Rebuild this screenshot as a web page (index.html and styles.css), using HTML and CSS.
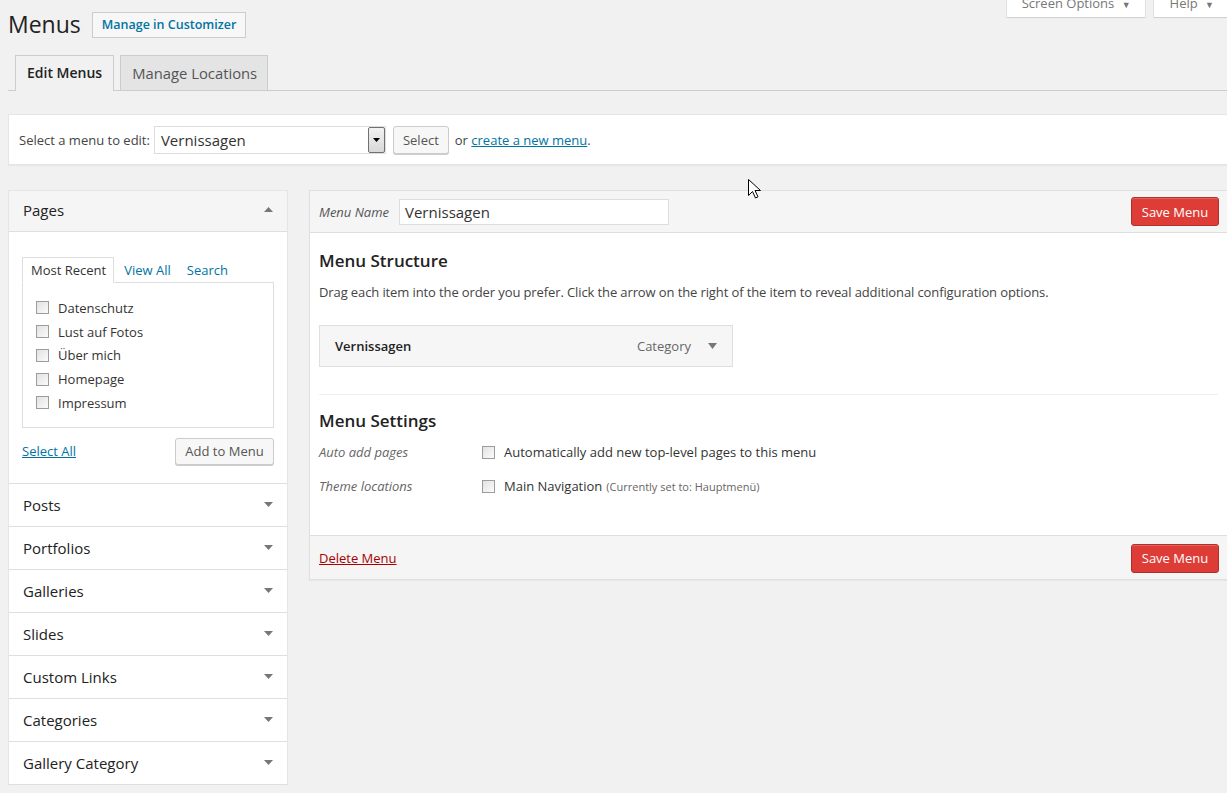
FILE: index.html
```html
<!DOCTYPE html>
<html lang="de">
<head>
    <meta charset="UTF-8">
    <title>Menus</title>
    <link rel="stylesheet" href="styles.css">
</head>
<body>
    <div class="wrap">
        <div class="top">
            <h1>Menus</h1>
            <a class="title-action" href="#">Manage in Customizer</a>
            <div class="screen-links">
                <span class="screen-tab">Screen Options <span class="caret">&#9660;</span></span>
                <span class="screen-tab help">Help <span class="caret">&#9660;</span></span>
            </div>
        </div>

        <div class="nav-tabs">
            <a class="nav-tab active" href="#">Edit Menus</a>
            <a class="nav-tab" href="#">Manage Locations</a>
        </div>

        <div class="manage-menus">
            <span class="select-label">Select a menu to edit:</span>
            <div class="fake-select">
                <span>Vernissagen</span>
                <span class="select-arrow"><svg width="7" height="4" viewBox="0 0 7 4"><path d="M0 0h7L3.5 4z" fill="#000"/></svg></span>
            </div>
            <button class="button">Select</button>
            <span class="or-text">or <a href="#">create a new menu</a>.</span>
        </div>

        <div class="columns">
            <div class="sidebar">
                <div class="acc-section open">
                    <div class="acc-title">Pages
                        <svg class="acc-arrow" width="9" height="5" viewBox="0 0 9 5"><path d="M0 5h9L4.5 0z" fill="#777"/></svg>
                    </div>
                    <div class="acc-content">
                        <div class="inner-tabs">
                            <span class="inner-tab active">Most Recent</span>
                            <a class="inner-tab" href="#">View All</a>
                            <a class="inner-tab" href="#">Search</a>
                        </div>
                        <div class="tab-panel">
                            <label class="check-row"><span class="cb"></span>Datenschutz</label>
                            <label class="check-row"><span class="cb"></span>Lust auf Fotos</label>
                            <label class="check-row"><span class="cb"></span>Über mich</label>
                            <label class="check-row"><span class="cb"></span>Homepage</label>
                            <label class="check-row"><span class="cb"></span>Impressum</label>
                        </div>
                        <div class="add-row">
                            <a href="#">Select All</a>
                            <button class="button">Add to Menu</button>
                        </div>
                    </div>
                </div>
                <div class="acc-section"><div class="acc-title">Posts<svg class="acc-arrow" width="9" height="5" viewBox="0 0 9 5"><path d="M0 0h9L4.5 5z" fill="#777"/></svg></div></div>
                <div class="acc-section"><div class="acc-title">Portfolios<svg class="acc-arrow" width="9" height="5" viewBox="0 0 9 5"><path d="M0 0h9L4.5 5z" fill="#777"/></svg></div></div>
                <div class="acc-section"><div class="acc-title">Galleries<svg class="acc-arrow" width="9" height="5" viewBox="0 0 9 5"><path d="M0 0h9L4.5 5z" fill="#777"/></svg></div></div>
                <div class="acc-section"><div class="acc-title">Slides<svg class="acc-arrow" width="9" height="5" viewBox="0 0 9 5"><path d="M0 0h9L4.5 5z" fill="#777"/></svg></div></div>
                <div class="acc-section"><div class="acc-title">Custom Links<svg class="acc-arrow" width="9" height="5" viewBox="0 0 9 5"><path d="M0 0h9L4.5 5z" fill="#777"/></svg></div></div>
                <div class="acc-section"><div class="acc-title">Categories<svg class="acc-arrow" width="9" height="5" viewBox="0 0 9 5"><path d="M0 0h9L4.5 5z" fill="#777"/></svg></div></div>
                <div class="acc-section"><div class="acc-title">Gallery Category<svg class="acc-arrow" width="9" height="5" viewBox="0 0 9 5"><path d="M0 0h9L4.5 5z" fill="#777"/></svg></div></div>
            </div>

            <div class="menu-edit">
                <div class="menu-header">
                    <span class="menu-name-label">Menu Name</span>
                    <div class="text-input">Vernissagen</div>
                    <button class="button-save">Save Menu</button>
                </div>
                <div class="menu-body">
                    <h3>Menu Structure</h3>
                    <p class="desc">Drag each item into the order you prefer. Click the arrow on the right of the item to reveal additional configuration options.</p>
                    <div class="menu-item">
                        <span class="item-title">Vernissagen</span>
                        <span class="item-type">Category</span>
                        <svg width="9" height="6" viewBox="0 0 9 6"><path d="M0 0h9L4.5 6z" fill="#777"/></svg>
                    </div>
                    <div class="divider"></div>
                    <h3>Menu Settings</h3>
                    <div class="settings">
                        <span class="setting-label">Auto add pages</span>
                        <label class="setting-value"><span class="cb"></span>Automatically add new top-level pages to this menu</label>
                        <span class="setting-label">Theme locations</span>
                        <label class="setting-value"><span class="cb"></span>Main Navigation <small>(Currently set to: Hauptmenü)</small></label>
                    </div>
                </div>
                <div class="menu-footer">
                    <a class="delete-link" href="#">Delete Menu</a>
                    <button class="button-save">Save Menu</button>
                </div>
            </div>
        </div>
    </div>

    <svg class="cursor" width="13" height="20" viewBox="0 0 13 20">
        <path d="M0.5 0.5v16l4-4 3 6.5 2.5-1.2-3-6.3h5.5z" fill="#fff" stroke="#000" stroke-width="1"/>
    </svg>
</body>
</html>
```

FILE: styles.css
```css
body {
    margin: 0;
    background-color: #f1f1f1;
    font-family: "Open Sans", sans-serif;
    font-size: 13px;
    color: #444;
    overflow: hidden;
}
a {
    color: #0074a2;
}
.wrap {
    padding-left: 8px;
}
.top {
    display: flex;
    align-items: flex-start;
    height: 55px;
}
h1 {
    margin: 10px 0 0;
    font-size: 23px;
    font-weight: 400;
    line-height: 29px;
    color: #222;
}
.title-action {
    margin: 12px 0 0 11px;
    padding: 0 9px;
    height: 24px;
    line-height: 24px;
    border: 1px solid #ccc;
    background: #f7f7f7;
    font-size: 12.5px;
    font-weight: 600;
    color: #0074a2;
    text-decoration: none;
}
.screen-links {
    margin-left: auto;
    display: flex;
    gap: 9px;
    margin-right: -3px;
}
.screen-tab {
    margin-top: -8px;
    height: 25px;
    line-height: 23px;
    padding: 0 16px;
    background: #fff;
    color: #777;
    white-space: nowrap;
    box-shadow: 0 0 0 1px rgba(0, 0, 0, 0.05), 0 1px 1px rgba(0, 0, 0, 0.08);
    font-size: 13px;
}
.screen-tab:first-child {
    padding: 0 14px 0 15px;
}
.caret {
    font-size: 9px;
    margin-left: 4px;
    color: #777;
}
.nav-tabs {
    display: flex;
    gap: 6px;
    padding-left: 7px;
    border-bottom: 1px solid #ccc;
}
.nav-tab {
    height: 34px;
    line-height: 34px;
    padding: 0 10px 0 11px;
    border: 1px solid #ccc;
    border-bottom: none;
    background: #e4e4e4;
    color: #555;
    font-size: 14.8px;
    text-decoration: none;
    margin-bottom: -1px;
}
.nav-tab.active {
    background: #f1f1f1;
    color: #222;
    font-size: 14px;
    font-weight: 600;
    height: 35px;
    padding: 0 11px 0 11px;
}
.manage-menus {
    margin-top: 23px;
    display: flex;
    align-items: center;
    height: 49px;
    padding: 0 10px;
    background: #fff;
    border: 1px solid #e5e5e5;
    border-right: none;
    box-shadow: 0 1px 1px rgba(0, 0, 0, 0.04);
}
.select-label {
    margin-right: 4px;
}
.fake-select {
    display: flex;
    align-items: center;
    justify-content: space-between;
    box-sizing: border-box;
    width: 232px;
    height: 28px;
    border: 1px solid #ddd;
    padding: 0 0 0 6px;
    font-size: 15px;
    color: #333;
}
.select-arrow {
    display: flex;
    align-items: center;
    justify-content: center;
    box-sizing: border-box;
    width: 17px;
    height: 26px;
    border: 1px solid #707070;
    border-radius: 2px;
    background: linear-gradient(#f2f2f2, #d8d8d8);
}
.button {
    font-family: "Open Sans", sans-serif;
    font-size: 13px;
    color: #555;
    background: #f7f7f7;
    border: 1px solid #ccc;
    border-radius: 3px;
    box-shadow: 0 1px 0 #ccc;
    height: 28px;
    padding: 0 10px;
}
.manage-menus .button {
    margin-left: 7px;
    height: 28px;
    padding: 0 9px;
}
.or-text {
    margin-left: 6px;
}
.columns {
    display: flex;
    align-items: flex-start;
    gap: 21px;
    margin-top: 25px;
}
.sidebar {
    flex: 0 0 280px;
    box-sizing: border-box;
    border: 1px solid #e5e5e5;
    border-bottom: none;
    background: #fff;
    box-shadow: 0 1px 1px rgba(0, 0, 0, 0.04);
}
.acc-section {
    border-bottom: 1px solid #dfdfdf;
}
.acc-title {
    display: flex;
    align-items: center;
    justify-content: space-between;
    height: 42px;
    padding: 0 14px 0 14px;
    font-size: 15px;
    color: #222;
}
.open .acc-title {
    height: 41px;
    padding-bottom: 3px;
    box-sizing: border-box;
    background: #f5f5f5;
    border-bottom: 1px solid #dfdfdf;
}
.open .acc-content {
    padding-top: 25px;
}
.acc-content {
    padding: 25px 13px 18px;
}
.inner-tabs {
    display: flex;
    align-items: flex-end;
    height: 25px;
}
.inner-tab {
    padding: 0 10px 0 0;
    line-height: 24px;
    text-decoration: none;
}
.inner-tab.active {
    padding: 0 7px 0 8px;
    border: 1px solid #ddd;
    border-bottom: 1px solid #fff;
    margin-bottom: -1px;
    color: #333;
    background: #fff;
    margin-right: 10px;
}
.inner-tabs a + a {
    margin-left: 6px;
}
.tab-panel {
    border: 1px solid #ddd;
    padding: 13px 13px 12px;
}
.check-row {
    display: flex;
    align-items: center;
    height: 23.75px;
    color: #333;
}
.cb {
    display: inline-block;
    flex: 0 0 auto;
    box-sizing: border-box;
    width: 13px;
    height: 13px;
    border: 1px solid #9c9c9c;
    background: linear-gradient(135deg, #e2e2e2, #fbfbfb);
    margin-right: 9px;
}
.add-row {
    display: flex;
    justify-content: space-between;
    align-items: center;
    margin-top: 10px;
}
.add-row .button {
    height: 27px;
    width: 99px;
    padding: 0;
}
.menu-edit {
    flex: 1;
    border: 1px solid #dfdfdf;
    border-right: none;
    background: #fff;
    box-shadow: 0 1px 1px rgba(0, 0, 0, 0.04);
}
.menu-header {
    display: flex;
    align-items: center;
    height: 41px;
    padding: 0 8px 0 9px;
    background: #f5f5f5;
    border-bottom: 1px solid #dfdfdf;
}
.menu-name-label {
    font-style: italic;
    color: #555;
    width: 80px;
}
.text-input {
    box-sizing: border-box;
    width: 270px;
    height: 26px;
    line-height: 24px;
    padding: 0 5px;
    border: 1px solid #ddd;
    background: #fff;
    font-size: 15px;
    color: #333;
}
.button-save {
    margin-left: auto;
    font-family: "Open Sans", sans-serif;
    font-size: 13px;
    color: #fff;
    background: #dd3d36;
    border: 1px solid #b0302a;
    border-radius: 3px;
    height: 29px;
    width: 88px;
    padding: 0;
    box-shadow: inset 0 1px 0 rgba(255, 255, 255, 0.2);
}
.menu-body {
    padding: 0 9px 32px;
}
h3 {
    margin: 16px 0 0;
    font-size: 17px;
    font-weight: 600;
    line-height: 24px;
    color: #222;
}
.desc {
    margin: 10px 0 0;
    line-height: 18px;
    letter-spacing: -0.11px;
}
.menu-item {
    display: flex;
    align-items: center;
    box-sizing: border-box;
    width: 414px;
    height: 42px;
    margin-top: 24px;
    padding: 0 15px;
    background: #f6f6f6;
    border: 1px solid #dfdfdf;
}
.item-title {
    font-weight: 600;
    color: #222;
}
.item-type {
    margin-left: auto;
    margin-right: 17px;
    color: #666;
}
.divider {
    margin-top: 27px;
    border-top: 1px solid #eee;
}
.divider + h3 {
    margin-top: 14px;
}
.settings {
    display: grid;
    grid-template-columns: 163px 1fr;
    grid-auto-rows: 34px;
    align-items: center;
    margin-top: 2px;
}
.setting-label {
    font-style: italic;
    color: #666;
}
.setting-value {
    display: flex;
    align-items: center;
    color: #333;
}
.setting-value small {
    font-size: 11px;
    color: #666;
    margin-left: 4px;
}
.menu-footer {
    display: flex;
    align-items: center;
    height: 44px;
    padding: 1px 8px 0 9px;
    box-sizing: border-box;
    background: #f5f5f5;
    border-top: 1px solid #dfdfdf;
}
.delete-link {
    color: #a00;
}
.cursor {
    position: absolute;
    left: 748px;
    top: 179px;
}
```
